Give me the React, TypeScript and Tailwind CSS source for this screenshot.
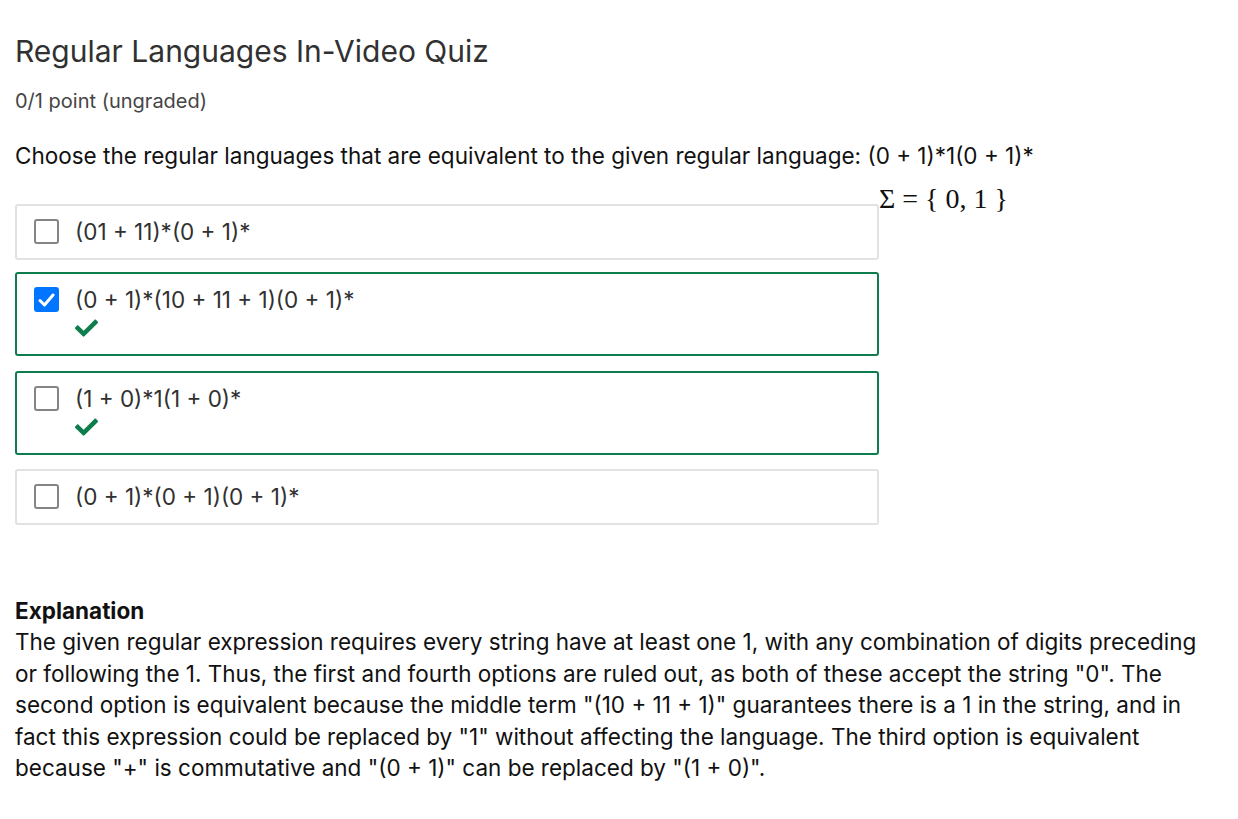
import * as React from "react";

type Option = {
  label: string;
  checked: boolean;
  correct: boolean;
  gap: string;
};

const options: Option[] = [
  { label: "(01 + 11)*(0 + 1)*", checked: false, correct: false, gap: "mb-[12px]" },
  { label: "(0 + 1)*(10 + 11 + 1)(0 + 1)*", checked: true, correct: true, gap: "mb-[15px]" },
  { label: "(1 + 0)*1(1 + 0)*", checked: false, correct: true, gap: "mb-[14px]" },
  { label: "(0 + 1)*(0 + 1)(0 + 1)*", checked: false, correct: false, gap: "" },
];

function CheckMark() {
  return (
    <svg width="23" height="19" viewBox="0 0 512 420" fill="#0d7d4d" aria-hidden>
      <path d="M173.898 407.404l-166.4-166.4c-9.997-9.997-9.997-26.206 0-36.204l36.203-36.204c9.997-9.998 26.207-9.998 36.204 0L192 280.69 432.095 40.596c9.997-9.997 26.207-9.997 36.204 0l36.203 36.204c9.997 9.997 9.997 26.206 0 36.204l-294.4 294.401c-9.998 9.997-26.207 9.997-36.204-.001z" />
    </svg>
  );
}

function Checkbox({ checked }: { checked: boolean }) {
  if (checked) {
    return (
      <span className="flex items-center justify-center w-[25px] h-[25px] rounded-[3px] bg-[#0075ff] shrink-0">
        <svg width="17" height="14" viewBox="0 0 17 14" fill="none" aria-hidden>
          <path d="M2 7.5l4.5 4.5L15 2" stroke="#fff" strokeWidth="3" strokeLinecap="round" strokeLinejoin="round" />
        </svg>
      </span>
    );
  }
  return (
    <span className="block w-[25px] h-[25px] rounded-[3px] border-2 border-[#858585] bg-white shrink-0" />
  );
}

function OptionBox({ option }: { option: Option }) {
  const border = option.correct ? "border-[#0d7d4d]" : "border-[#e2e2e2]";
  return (
    <div className={`border-2 ${border} rounded-[3px] pl-[17px] pr-4 py-[12px] ${option.gap}`}>
      <div className="flex items-center gap-4 h-[28px]">
        <Checkbox checked={option.checked} />
        <span className="text-[22.5px] leading-[28px] text-[#313131]">{option.label}</span>
      </div>
      {option.correct && (
        <div className="mt-[4px] h-[24px] pl-[41px]">
          <CheckMark />
        </div>
      )}
    </div>
  );
}

export default function App() {
  return (
    <div className="min-h-screen bg-white font-['Inter','Noto_Sans',sans-serif]">
      <div className="px-[15px] pt-[33px] w-[1238px]">
        <h2 className="text-[30px] leading-[36px] text-[#313131] font-normal">
          Regular Languages In-Video Quiz
        </h2>
        <div className="mt-[20px] text-[20px] leading-[24px] text-[#454545]">
          0/1 point (ungraded)
        </div>
        <p className="mt-[27px] text-[22.5px] leading-[31.5px] text-[#111111]">
          Choose the regular languages that are equivalent to the given regular language: (0 + 1)*1(0 + 1)*
        </p>

        <div className="flex items-start">
          <div className="w-[864px] mt-[32px]">
            {options.map((o) => (
              <OptionBox key={o.label} option={o} />
            ))}
          </div>
          <div className="mt-[12px] font-['Liberation_Serif','DejaVu_Serif',serif] text-[28px] leading-[30px] text-[#111111] whitespace-nowrap">
            Σ = {"{"} 0, 1 {"}"}
          </div>
        </div>

        <div className="mt-[70px] text-[22.5px] leading-[31.5px] text-[#111111]">
          <div className="font-bold">Explanation</div>
          <p>
            The given regular expression requires every string have at least one 1, with any combination of digits preceding or following the 1. Thus, the first and fourth options are ruled out, as both of these accept the string "0". The second option is equivalent because the middle term "(10 + 11 + 1)" guarantees there is a 1 in the string, and in fact this expression could be replaced by "1" without affecting the language. The third option is equivalent because "+" is commutative and "(0 + 1)" can be replaced by "(1 + 0)".
          </p>
        </div>
      </div>
    </div>
  );
}
